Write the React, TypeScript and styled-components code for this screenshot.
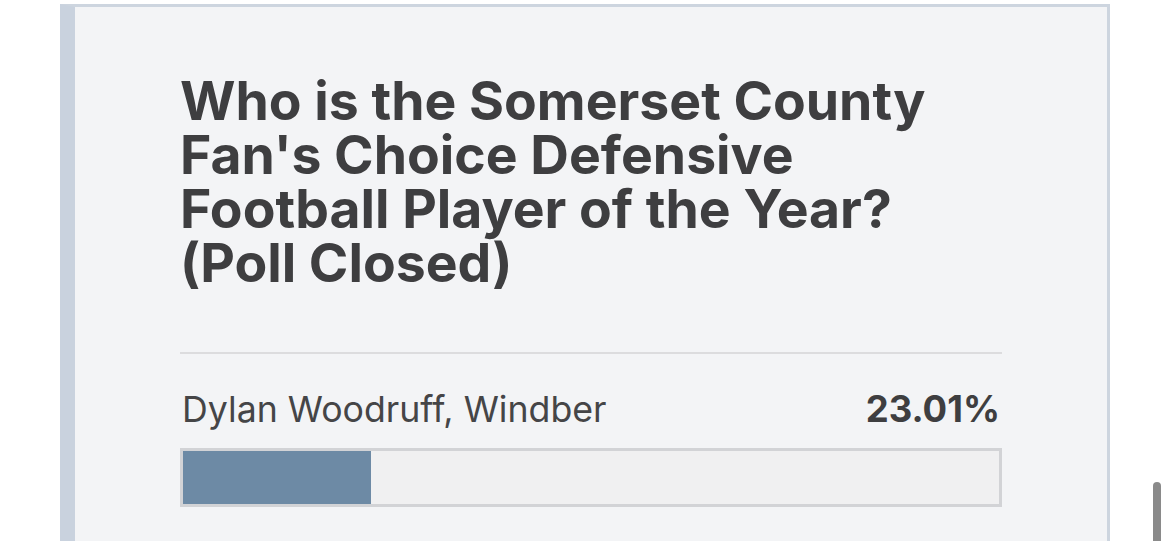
import React from 'react'
import styled, { createGlobalStyle } from 'styled-components'

const GlobalStyle = createGlobalStyle`
  html, body {
    margin: 0;
    padding: 0;
    background: #ffffff;
    overflow: hidden;
  }
  body {
    font-family: Inter, "Noto Sans", "Liberation Sans", sans-serif;
    color: #404040;
  }
`

const Page = styled.div`
  height: 541px;
  padding: 4px 0 0 60px;
  box-sizing: border-box;
`

const Card = styled.section`
  width: 1050px;
  min-height: 600px;
  box-sizing: border-box;
  background: #f3f4f6;
  border-left: 15px solid #c9d2de;
  border-top: 3px solid #cdd5df;
  border-right: 3px solid #cdd5df;
  padding: 67px 105px 0 105px;
`

const Question = styled.h2`
  margin: 0;
  font-size: 53.5px;
  line-height: 54px;
  font-weight: 700;
  color: #3e3e40;
`

const Divider = styled.hr`
  margin: 62px 0 0;
  border: none;
  border-top: 2px solid #dcdcde;
`

const Option = styled.div`
  margin-top: 35px;
`

const OptionHead = styled.div`
  display: flex;
  justify-content: space-between;
  align-items: baseline;
  padding: 0 2px;
  line-height: 40px;
`

const OptionName = styled.span`
  font-size: 35.7px;
  font-weight: 400;
  color: #454547;
`

const OptionShare = styled.span`
  font-size: 36.5px;
  font-weight: 700;
  color: #3e3e40;
`

const Track = styled.div`
  margin-top: 19px;
  height: 59px;
  box-sizing: border-box;
  border: 3px solid #d2d3d6;
  background: #f0f0f1;
`

const Fill = styled.div`
  height: 100%;
  background: #6d8aa5;
`

const ScrollThumb = styled.div`
  position: fixed;
  right: 9px;
  top: 482px;
  width: 8px;
  height: 80px;
  border-radius: 4px;
  background: #8a8a8a;
`

const options = [{ name: 'Dylan Woodruff, Windber', share: 23.01 }]

export default function App() {
  return (
    <Page>
      <GlobalStyle />
      <Card>
        <Question>
          Who is the Somerset County Fan's Choice Defensive Football Player of the Year? (Poll Closed)
        </Question>
        <Divider />
        {options.map((o) => (
          <Option key={o.name}>
            <OptionHead>
              <OptionName>{o.name}</OptionName>
              <OptionShare>{o.share.toFixed(2)}%</OptionShare>
            </OptionHead>
            <Track>
              <Fill style={{ width: `${o.share}%` }} />
            </Track>
          </Option>
        ))}
      </Card>
      <ScrollThumb />
    </Page>
  )
}
